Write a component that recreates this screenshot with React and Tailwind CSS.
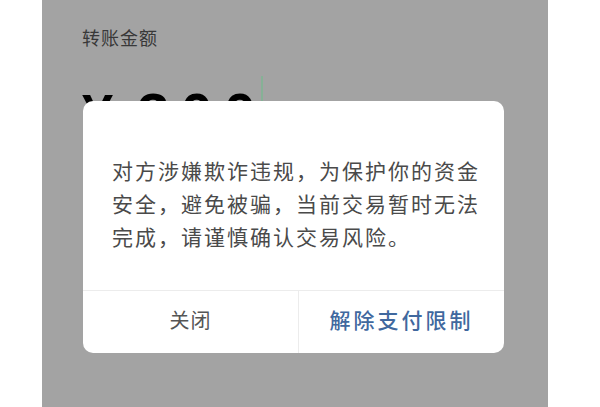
import React from "react";

const font = { fontFamily: '"Noto Sans CJK SC", "Noto Sans", sans-serif' };
const numFont = { fontFamily: '"Liberation Sans", Arial, sans-serif' };

export default function App() {
  return (
    <div className="w-full h-[407px] bg-white flex overflow-hidden" style={font}>
      {/* gray page (dimmed by the modal mask) */}
      <div className="relative ml-[42px] w-[506px] h-full bg-[#a3a3a3]">
        <div className="pl-[40px] pt-[25px]">
          <div className="text-[18px] leading-[24px] text-[#383838] tracking-[1px]">转账金额</div>
          <div className="mt-[28px] flex items-start h-[60px]">
            <span className="mt-[10px] text-[56px] leading-[54px] font-bold text-black" style={numFont}>
              ¥
            </span>
            <span
              className="mt-[10px] ml-[24px] text-[58px] leading-[54px] font-bold text-black tracking-[11px]"
              style={numFont}
            >
              300
            </span>
            <span className="ml-[-6px] mt-[-1px] w-[2px] h-[40px] bg-[#86b196]" />
          </div>
        </div>

        {/* modal */}
        <div className="absolute left-[41px] top-[101px] w-[421px] h-[252px] bg-white rounded-[10px] flex flex-col overflow-hidden">
          <div className="flex-1 pl-[29px] pr-[20px] pt-[53px] text-[21px] leading-[33px] tracking-[2px] text-[#4a4a4a]">
            对方涉嫌欺诈违规，为保护你的资金安全，避免被骗，当前交易暂时无法完成，请谨慎确认交易风险。
          </div>
          <div className="h-[63px] flex border-t border-[#ececec]">
            <div className="w-[215px] pb-[4px] flex items-center justify-center text-[20px] tracking-[1px] text-[#555555]">
              关闭
            </div>
            <div className="flex-1 pb-[4px] flex items-center justify-center border-l border-[#ececec] text-[21px] tracking-[3px] text-[#40689e] font-medium">
              解除支付限制
            </div>
          </div>
        </div>
      </div>
    </div>
  );
}
